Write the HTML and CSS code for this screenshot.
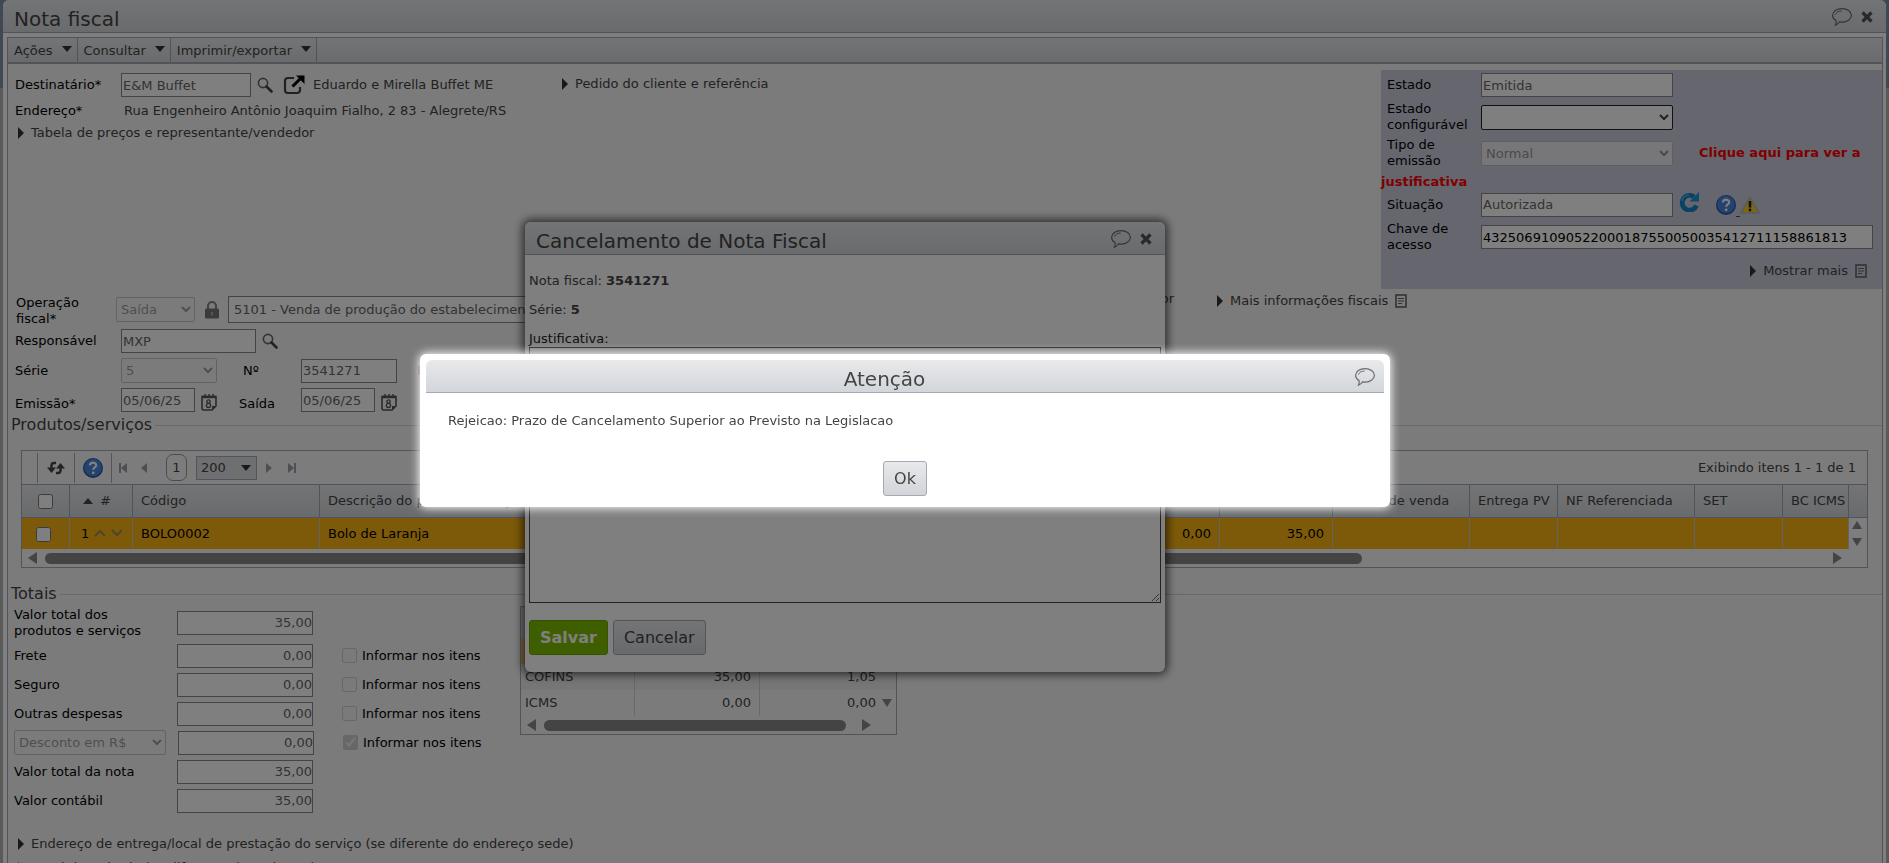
FILE: index.html
```
<!DOCTYPE html>
<html lang="pt-BR">
  <head>
    <meta charset="UTF-8" />
    <meta name="viewport" content="width=device-width, initial-scale=1.0" />
    <title>Nota fiscal</title>
    <link rel="stylesheet" href="styles.css">
  </head>
  <body>
    <!-- ícones -->
    <svg class="sprite" width="0" height="0" aria-hidden="true">
      <symbol id="i-bubble" viewBox="0 0 20 18">
        <path d="M4 12.600C1.800 11.200.6 9.400.6 7.400.6 3.600 4.800.6 10 .6s9.400 3 9.400 6.600-4 6.800-9 6.900c-1 0-1.900-.1-2.800-.3C6.600 15.400 5.200 16.600 3.400 17.200c.8-1.400 1-2.900.6-4.600z" fill="none" stroke="currentColor" stroke-width="1.200"/>
        <path d="M3.400 6.600C4.200 4.400 6.600 3 9.600 3" fill="none" stroke="currentColor" stroke-width="1"/>
      </symbol>
      <symbol id="i-close" viewBox="0 0 12 12">
        <path d="M1.500 1.500l9 9M10.500 1.500l-9 9" stroke="currentColor" stroke-width="3.200"/>
      </symbol>
      <symbol id="i-search" viewBox="0 0 16 16">
        <circle cx="6" cy="6" r="4.600" fill="none" stroke="#666" stroke-width="1.600"/>
        <path d="M9.500 9.500l5 5" stroke="#444" stroke-width="2.600" stroke-linecap="round"/>
      </symbol>
      <symbol id="i-open" viewBox="0 0 22 20">
        <path d="M11 3H5Q2 3 2 6v9q0 3 3 3h9q3 0 3-3v-3" fill="none" stroke="#444" stroke-width="2.200"/>
        <path d="M9.500 11.500L17 4" stroke="#000" stroke-width="3"/>
        <path d="M13 .5h8.500V9z" fill="#000"/>
      </symbol>
      <symbol id="i-note" viewBox="0 0 12 14">
        <rect x="1" y="1" width="10" height="12" fill="none" stroke="#666" stroke-width="1.600"/>
        <path d="M3 4.500h6M3 7h6M3 9.500h4" stroke="#666" stroke-width="1.200"/>
      </symbol>
      <symbol id="i-lock" viewBox="0 0 14 18">
        <path d="M3 8V5a4 4 0 0 1 8 0v3" fill="none" stroke="#888" stroke-width="2.200"/>
        <rect x="0" y="7.500" width="14" height="10" rx="1.500" fill="#777"/>
        <path d="M7 11v3.500" stroke="#bbb" stroke-width="1.600"/>
      </symbol>
      <symbol id="i-cal" viewBox="0 0 16 18">
        <path d="M1 3.500h14V13l-4 4H2.500Q1 17 1 15.500z" fill="none" stroke="#555" stroke-width="1.600"/>
        <path d="M1 4h14" stroke="#555" stroke-width="2.400"/>
        <path d="M4 1v2.500M8 1v2.500M12 1v2.500" stroke="#555" stroke-width="1.400"/>
        <path d="M15 13l-4 4v-4z" fill="#555"/>
        <circle cx="7.500" cy="8.600" r="1.700" fill="none" stroke="#555" stroke-width="1.300"/>
        <circle cx="7.500" cy="12.400" r="2.100" fill="none" stroke="#555" stroke-width="1.300"/>
      </symbol>
      <symbol id="i-refresh" viewBox="0 0 20 20">
        <path d="M17.500 13.500A7.400 7.400 0 1 1 15 4.800" fill="none" stroke="#1583c8" stroke-width="4.800"/>
        <path d="M20 0v9.500h-9.500z" fill="#1f92d8"/>
        <path d="M3 9Q4 3.500 10 3" fill="none" stroke="#63c0ee" stroke-width="1.200"/>
      </symbol>
      <symbol id="i-help" viewBox="0 0 20 20">
        <circle cx="10" cy="10" r="10" fill="#2456a6"/>
        <circle cx="10" cy="9.500" r="8.800" fill="#4a86de"/>
        <path d="M6.800 7.400C7 5.400 8.300 4.600 10 4.600s3.200 1 3.200 2.700c0 2-3 2.300-3 4.500" fill="none" stroke="#fff" stroke-width="2.200"/>
        <circle cx="10.200" cy="14.800" r="1.400" fill="#fff"/>
      </symbol>
      <symbol id="i-warn" viewBox="0 0 20 18">
        <path d="M10 1.200L19 16.800H1z" fill="#f6d020" stroke="#b8b8b8" stroke-width="1.800" stroke-linejoin="round"/>
        <path d="M10 5v6.500" stroke="#222" stroke-width="2.600"/>
        <circle cx="10" cy="14" r="1.400" fill="#222"/>
      </symbol>
      <symbol id="i-reload" viewBox="0 0 18 14">
        <path d="M9 2H7Q4.500 2 4.500 4.500V8M9 12h2q2.500 0 2.500-2.500V6" fill="none" stroke="#444" stroke-width="2.400"/>
        <path d="M0 6.500h9L4.500 12zM9 7.500h9L13.500 2z" fill="#444"/>
      </symbol>
    </svg>

    <div class="window">
      <header class="bar">
        <h1>Nota fiscal</h1>
        <button type="button" class="icon" aria-label="Comentário"><svg class="bubble"><use href="#i-bubble"/></svg></button>
        <button type="button" class="icon" aria-label="Fechar"><svg class="close"><use href="#i-close"/></svg></button>
      </header>

      <main class="content">
        <nav class="menu">
          <button type="button">Ações<i class="down"></i></button>
          <button type="button">Consultar<i class="down"></i></button>
          <button type="button">Imprimir/exportar<i class="down"></i></button>
        </nav>

        <!-- destinatário e estado -->
        <section class="top">
          <div class="recipient">
            <div class="row">
              <label class="label" for="dest">Destinatário*</label>
              <input id="dest" class="w-130" type="text" value="E&amp;M Buffet" readonly>
              <svg class="search"><use href="#i-search"/></svg>
              <svg class="open"><use href="#i-open"/></svg>
              <span>Eduardo e Mirella Buffet ME</span>
            </div>
            <div class="row row-address">
              <span class="label">Endereço*</span>
              <span class="address">Rua Engenheiro Antônio Joaquim Fialho, 2 83 - Alegrete/RS</span>
            </div>
            <a class="more" href="#tabela"><i class="right"></i>Tabela de preços e representante/vendedor</a>
          </div>
          <a class="more order" href="#pedido"><i class="right"></i>Pedido do cliente e referência</a>

          <div class="status">
            <div class="status-row">
              <label for="estado">Estado</label>
              <input id="estado" class="w-192" type="text" value="Emitida" readonly>
            </div>
            <div class="status-row tall">
              <label for="conf">Estado configurável</label>
              <select id="conf" class="w-192 strong"><option></option></select>
            </div>
            <div class="status-row tall">
              <label for="tipo">Tipo de emissão</label>
              <select id="tipo" class="w-192" disabled><option>Normal</option></select>
              <a class="warning" href="#justificativa">Clique aqui para ver a</a>
            </div>
            <a class="warning rest" href="#justificativa">justificativa</a>
            <div class="status-row situation">
              <label for="sit">Situação</label>
              <input id="sit" class="w-192" type="text" value="Autorizada" readonly>
              <svg class="refresh"><use href="#i-refresh"/></svg>
              <svg class="help"><use href="#i-help"/></svg>
              <span class="underline"></span>
              <svg class="warn"><use href="#i-warn"/></svg>
            </div>
            <div class="status-row tall">
              <label for="chave">Chave de acesso</label>
              <input id="chave" class="key" type="text" value="43250691090522000187550050035412711158861813">
            </div>
            <a class="more show" href="#mais"><i class="right"></i>Mostrar mais<svg class="note"><use href="#i-note"/></svg></a>
          </div>
        </section>

        <!-- operação -->
        <section class="operation">
          <div class="row row-op">
            <label class="label op" for="oper">Operação fiscal*</label>
            <select id="oper" class="w-80" disabled><option>Saída</option></select>
            <svg class="lock"><use href="#i-lock"/></svg>
            <input class="nature" type="text" aria-label="Natureza da operação" value="5101 - Venda de produção do estabelecimento" readonly>
            <span class="payer">Por valor</span>
            <a class="more tax-info" href="#fiscais"><i class="right"></i>Mais informações fiscais<svg class="note"><use href="#i-note"/></svg></a>
          </div>
          <div class="row">
            <label class="label" for="resp">Responsável</label>
            <input id="resp" class="w-135" type="text" value="MXP" readonly>
            <svg class="search"><use href="#i-search"/></svg>
          </div>
          <div class="row">
            <label class="label" for="serie">Série</label>
            <select id="serie" class="w-96" disabled><option>5</option></select>
            <label class="label-2" for="num">Nº</label>
            <input id="num" class="w-96" type="text" value="3541271" readonly>
            <span class="faded">Próximo</span>
          </div>
          <div class="row">
            <label class="label low" for="emissao">Emissão*</label>
            <input id="emissao" class="w-74" type="text" value="05/06/25" readonly>
            <svg class="cal"><use href="#i-cal"/></svg>
            <label class="label-2 low" for="saida">Saída</label>
            <input id="saida" class="w-74" type="text" value="05/06/25" readonly>
            <svg class="cal"><use href="#i-cal"/></svg>
          </div>
        </section>

        <!-- produtos -->
        <h2 class="legend products-legend">Produtos/serviços</h2>
        <section class="grid">
          <div class="pager">
            <span class="cell first"></span>
            <span class="cell"><svg class="reload"><use href="#i-reload"/></svg></span>
            <span class="cell"><svg class="help"><use href="#i-help"/></svg></span>
            <svg class="nav" viewBox="0 0 58 12">
              <path d="M1 1h2v10H1zM9 1v10L3 6zM29 1v10l-6-5z"/>
            </svg>
            <span class="page">1</span>
            <select class="size" aria-label="Itens por página"><option>200</option></select>
            <svg class="nav next" viewBox="0 0 58 12">
              <path d="M9 1v10l6-5zM31 1v10l6-5zM37 1h2v10h-2z"/>
            </svg>
            <span class="count">Exibindo itens 1 - 1 de 1</span>
          </div>
          <table class="items">
            <colgroup>
              <col class="c-check"><col class="c-num"><col class="c-code"><col>
              <col class="c-value"><col class="c-value"><col class="c-order"><col class="c-short">
              <col class="c-order"><col class="c-short"><col class="c-last"><col class="c-scroll">
            </colgroup>
            <thead>
              <tr>
                <th class="check"><input type="checkbox" aria-label="Selecionar todos"></th>
                <th class="sort"><i class="up"></i>#</th>
                <th>Código</th>
                <th>Descrição do produto/serviço</th>
                <th>Desconto</th>
                <th>Total</th>
                <th>Pedido de venda</th>
                <th>Entrega PV</th>
                <th>NF Referenciada</th>
                <th>SET</th>
                <th>BC ICMS</th>
                <th></th>
              </tr>
            </thead>
            <tbody>
              <tr>
                <td class="check"><input type="checkbox" aria-label="Selecionar item 1"></td>
                <td class="sort">1<svg class="order-arrows" viewBox="0 0 28 10"><path d="M1 8l5-5 5 5M18 2l5 5 5-5"/></svg></td>
                <td>BOLO0002</td>
                <td>Bolo de Laranja</td>
                <td class="num">0,00</td>
                <td class="num">35,00</td>
                <td></td>
                <td></td>
                <td></td>
                <td></td>
                <td></td>
                <td class="scroll-v"><i class="arrow a-up"></i><i class="arrow a-down"></i></td>
              </tr>
            </tbody>
          </table>
          <div class="scroll-h"><i class="arrow a-left"></i><span class="track"><span class="thumb"></span></span><i class="arrow a-right"></i></div>
        </section>

        <!-- totais -->
        <h2 class="legend totals-legend">Totais</h2>
        <section class="totals">
          <div class="sums">
            <div class="sum two"><label for="t1">Valor total dos produtos e serviços</label><input id="t1" type="text" value="35,00" readonly></div>
            <div class="sum"><label for="t2">Frete</label><input id="t2" type="text" value="0,00" readonly><label class="inform"><input type="checkbox" disabled>Informar nos itens</label></div>
            <div class="sum"><label for="t3">Seguro</label><input id="t3" type="text" value="0,00" readonly><label class="inform"><input type="checkbox" disabled>Informar nos itens</label></div>
            <div class="sum"><label for="t4">Outras despesas</label><input id="t4" type="text" value="0,00" readonly><label class="inform"><input type="checkbox" disabled>Informar nos itens</label></div>
            <div class="sum"><select class="discount" aria-label="Desconto" disabled><option>Desconto em R$</option></select><input type="text" aria-label="Valor do desconto" value="0,00" readonly><label class="inform"><input type="checkbox" checked disabled>Informar nos itens</label></div>
            <div class="sum"><label for="t6">Valor total da nota</label><input id="t6" type="text" value="35,00" readonly></div>
            <div class="sum"><label for="t7">Valor contábil</label><input id="t7" type="text" value="35,00" readonly></div>
          </div>
          <div class="taxes">
            <table>
              <colgroup><col class="c-tax"><col class="c-base"><col><col class="c-scroll"></colgroup>
              <thead><tr><th>Imposto</th><th>Base</th><th>Valor</th><th></th></tr></thead>
              <tbody>
                <tr class="selected"><td>PIS</td><td class="num">35,00</td><td class="num">0,23</td><td></td></tr>
                <tr class="odd"><td>COFINS</td><td class="num">35,00</td><td class="num">1,05</td><td></td></tr>
                <tr><td>ICMS</td><td class="num">0,00</td><td class="num">0,00</td><td class="scroll-v"><i class="arrow a-down"></i></td></tr>
              </tbody>
            </table>
            <div class="scroll-h"><i class="arrow a-left"></i><span class="thumb"></span><i class="arrow a-right"></i></div>
          </div>
        </section>
        <div class="links">
          <a class="more" href="#entrega"><i class="right"></i>Endereço de entrega/local de prestação do serviço (se diferente do endereço sede)</a>
          <a class="more" href="#retirada"><i class="right"></i>Local de retirada (se diferente do emitente)</a>
        </div>
      </main>
    </div>

    <!-- cancelamento -->
    <div class="dialog cancel" role="dialog" aria-labelledby="cancel-title">
      <header class="bar">
        <h2 id="cancel-title">Cancelamento de Nota Fiscal</h2>
        <button type="button" class="icon" aria-label="Comentário"><svg class="bubble"><use href="#i-bubble"/></svg></button>
        <button type="button" class="icon" aria-label="Fechar"><svg class="close"><use href="#i-close"/></svg></button>
      </header>
      <div class="cancel-body">
        <p>Nota fiscal: <b>3541271</b></p>
        <p>Série: <b>5</b></p>
        <label for="just">Justificativa:</label>
        <textarea id="just"></textarea>
        <div class="actions">
          <button type="button" class="btn save">Salvar</button>
          <button type="button" class="btn">Cancelar</button>
        </div>
      </div>
    </div>

    <div class="overlay"></div>

    <!-- alerta -->
    <div class="dialog alert" role="alertdialog" aria-labelledby="alert-title">
      <header class="bar">
        <h2 id="alert-title">Atenção</h2>
        <button type="button" class="icon" aria-label="Comentário"><svg class="bubble"><use href="#i-bubble"/></svg></button>
      </header>
      <p>Rejeicao: Prazo de Cancelamento Superior ao Previsto na Legislacao</p>
      <button type="button" class="btn">Ok</button>
    </div>
  </body>
</html>
```

FILE: styles.css
```
* {
  padding: 0;
  margin: 0;
  box-sizing: border-box;
}
html,
body {
  height: 100%;
  overflow: hidden;
}
body {
  background: #b5b5b5 linear-gradient(#7d93a8, #7d93a8) no-repeat;
  background-size: 100% 88px;
  padding: 0 3px;
  font-family: "DejaVu Sans", Verdana, sans-serif;
  font-size: 13px;
  line-height: 16px;
  color: #444;
}
svg {
  display: block;
  flex: none;
}
.sprite {
  position: absolute;
}
a {
  color: inherit;
  text-decoration: none;
}
button,
input,
select,
textarea {
  font: inherit;
}
h1,
h2 {
  font-weight: normal;
}
label,
.label {
  color: #000;
}

/* inputs */
input[type="text"] {
  height: 24px;
  border: 1px solid #888;
  background: #fff;
  color: #666;
  padding: 0 1px;
  min-width: 0;
}
select {
  height: 25px;
  border: 1px solid #888;
  border-radius: 2px;
  background-color: #fff;
  color: #444;
}
select:disabled {
  background-color: #f8f8f8;
  border-color: #bbb;
  color: #888;
  opacity: 0.8;
}
select.strong {
  border-color: #222;
}
.w-74 {
  width: 74px;
}
.w-80 {
  width: 79px;
}
.w-96 {
  width: 96px;
}
.w-130 {
  width: 130px;
}
.w-135 {
  width: 135px;
}
.w-192 {
  width: 192px;
}

/* title bars */
.bar {
  display: flex;
  align-items: center;
  height: 33px;
  padding: 2px 13px 0 11px;
  background: linear-gradient(#e8e9eb, #d2d6da);
  border-bottom: 1px solid #a4a9b3;
  border-radius: 6px 6px 0 0;
}
.bar h1,
.bar h2 {
  flex: 1;
  padding-top: 4px;
  font-size: 20px;
  line-height: 24px;
}
.icon {
  border: none;
  background: none;
  color: #6a6a6a;
  margin-left: 9px;
}
.bubble {
  width: 20px;
  height: 18px;
}
.close {
  width: 12px;
  height: 12px;
  color: #555;
}

.window {
  display: flex;
  flex-direction: column;
  height: 100%;
  background: #fff;
  border-radius: 6px 6px 0 0;
}
.content {
  flex: 1;
  min-height: 0;
  overflow: hidden;
  margin: 4px 3px 0 4px;
  border: 1px solid #a4a9b3;
  border-bottom: none;
  background: #f7f7f7;
}

/* menu */
.menu {
  display: flex;
  height: 26px;
  background: linear-gradient(#e8e9eb, #d2d6da);
  border-bottom: 2px solid #a4a9b3;
}
.menu button {
  display: flex;
  align-items: center;
  gap: 9px;
  padding: 2px 5px 0 6px;
  border: none;
  border-right: 1px solid #a4a9b3;
  background: none;
  color: #444;
}
.down,
.right,
.up {
  flex: none;
  width: 0;
  height: 0;
  border: 5px solid transparent;
}
.down {
  border-width: 6px 5px 0;
  border-top-color: #333;
  margin-bottom: 4px;
}
.right {
  border-width: 6px 0 6px 6px;
  border-left-color: #333;
}
.up {
  border-width: 0 5px 6px;
  border-bottom-color: #444;
}
.more {
  display: flex;
  align-items: center;
  gap: 7px;
}

/* destinatário */
.top {
  display: flex;
  align-items: flex-start;
  padding-top: 6px;
}
.recipient {
  width: 554px;
  padding: 3px 0 0 7px;
}
.row {
  display: flex;
  align-items: center;
}
.label {
  width: 106px;
  flex: none;
}
.search {
  width: 16px;
  height: 16px;
  margin: 0 10px 0 6px;
}
.open {
  width: 22px;
  height: 20px;
  margin-right: 8px;
}
.row-address {
  height: 28px;
}
.address {
  padding-left: 3px;
}
.recipient .more {
  padding-left: 3px;
}
.order {
  margin-top: 6px;
}

.status {
  width: 501px;
  height: 219px;
  margin-left: auto;
  padding-top: 3px;
  background: #ccccde;
}
.status-row {
  display: flex;
  align-items: center;
  padding-left: 6px;
}
.status-row label {
  width: 94px;
  flex: none;
}
.status-row.tall {
  height: 36px;
  padding-top: 4px;
}
.status .warning {
  color: #f00;
  font-weight: bold;
  padding-left: 26px;
}
.status .rest {
  display: block;
  padding: 5px 0 1px;
}
.situation {
  margin-top: 1px;
}
.refresh {
  width: 20px;
  height: 20px;
  margin: 0 17px 5px 6px;
}
.help {
  width: 20px;
  height: 20px;
}
.underline {
  width: 4px;
  height: 25px;
  border-bottom: 1px solid #444;
}
.warn {
  width: 20px;
  height: 18px;
}
.status .key {
  flex: 1;
  margin-right: 9px;
  color: #000;
}
.note {
  width: 12px;
  height: 14px;
}
.show {
  justify-content: flex-end;
  margin: 10px 15px 0 0;
}

/* operação */
.operation {
  display: flex;
  flex-direction: column;
  gap: 5px;
  padding: 6px 0 0 7px;
}
.row-op {
  height: 29px;
}
.label.op {
  width: 101px;
  padding: 2px 20px 0 1px;
}
.lock {
  width: 14px;
  height: 18px;
  margin: 0 9px 0 10px;
}
.row .nature {
  width: 560px;
  height: 27px;
  padding-left: 5px;
}
.payer {
  width: 386px;
  padding-bottom: 22px;
  margin-right: 43px;
  text-align: right;
}
.tax-info {
  padding-bottom: 18px;
}
.label-2 {
  width: 58px;
  flex: none;
}
.w-96 + .label-2 {
  margin-left: 26px;
}
.faded {
  margin-left: 20px;
  color: #999;
}
.low {
  padding-top: 8px;
}
.cal {
  width: 16px;
  height: 18px;
  margin: 4px 22px 0 6px;
}
.cal + .label-2 {
  width: 62px;
}

.legend {
  display: flex;
  align-items: center;
  gap: 3px;
  margin-left: 3px;
  font-size: 16px;
  line-height: 24px;
}
.legend::after {
  content: "";
  flex: 1;
  height: 1px;
  background: #d0d0d0;
}
.products-legend {
  margin-top: 1px;
}

/* grid */
.grid {
  margin: 13px 14px 0 13px;
  border: 1px solid #a4a9b3;
  background: #fafafa;
}
.pager {
  display: flex;
  align-items: center;
  height: 33px;
  padding-right: 11px;
  background: #f9f9f9;
}
.cell {
  display: flex;
  align-items: center;
  justify-content: center;
  width: 37px;
  height: 30px;
  border-right: 1px solid #a4a9b3;
}
.cell.first {
  width: 16px;
}
.reload {
  width: 18px;
  height: 14px;
}
.nav {
  width: 58px;
  height: 12px;
  margin: 0 -10px 0 6px;
  fill: #9a9fa8;
}
.nav.next {
  margin-left: 0;
}
.page {
  width: 21px;
  height: 27px;
  border: 1px solid #999;
  border-radius: 7px;
  line-height: 26px;
  text-align: center;
}
.size {
  appearance: none;
  width: 61px;
  height: 24px;
  margin-left: 9px;
  padding-left: 4px;
  border-color: #a4a9b3;
  border-radius: 0;
  background: #dcdee2 url("data:image/svg+xml,%3Csvg xmlns='http://www.w3.org/2000/svg' width='10' height='6'%3E%3Cpath d='M0 0h10L5 6z' fill='%23333'/%3E%3C/svg%3E") no-repeat right 5px center;
}
.count {
  margin-left: auto;
}
table {
  width: 100%;
  table-layout: fixed;
  border-collapse: separate;
  border-spacing: 0;
}
.items th {
  height: 34px;
  padding: 0 0 0 8px;
  border: solid #a4a9b3;
  border-width: 1px 1px 1px 0;
  background: linear-gradient(#e8e9eb, #d2d6da);
  font-weight: normal;
  text-align: left;
  white-space: nowrap;
  overflow: hidden;
}
.items th:last-child {
  border-right: none;
}
.items td {
  height: 31px;
  padding: 0 0 0 8px;
  border-right: 1px solid #c9c9c9;
  background: #fab514;
  color: #000;
}
.items td.num {
  padding-right: 8px;
  text-align: right;
}
.c-check {
  width: 48px;
}
.c-num {
  width: 63px;
}
.c-code {
  width: 187px;
}
.c-value {
  width: 113px;
}
.c-order {
  width: 137px;
}
.c-short {
  width: 88px;
}
.c-last {
  width: 66px;
}
.c-scroll {
  width: 18px;
}
.items .check {
  padding: 0;
  text-align: center;
}
.items td.check {
  padding-right: 4px;
}
.check input {
  width: 15px;
  height: 15px;
  vertical-align: middle;
}
.items th.sort {
  padding-left: 13px;
}
.sort .up {
  display: inline-block;
  margin-right: 7px;
  vertical-align: 1px;
}
.items td.sort {
  padding-left: 11px;
}
.order-arrows {
  display: inline-block;
  width: 28px;
  height: 10px;
  margin-left: 5px;
  fill: none;
  stroke: #9a8a5a;
  stroke-width: 2;
}
td.scroll-v,
.items td.scroll-v {
  padding: 0 0 0 3px;
  background: none;
  border: none;
}
.arrow {
  display: block;
  flex: none;
  width: 0;
  height: 0;
  border: 0 solid transparent;
}
.a-up {
  border-width: 0 5px 8px;
  border-bottom-color: #888;
  margin-bottom: 9px;
}
.a-down {
  border-width: 8px 5px 0;
  border-top-color: #888;
}
.a-left {
  border-width: 6px 9px 6px 0;
  border-right-color: #888;
}
.a-right {
  border-width: 6px 0 6px 9px;
  border-left-color: #888;
}
.scroll-h {
  display: flex;
  align-items: center;
  height: 18px;
  padding: 0 25px 0 6px;
}
.track {
  flex: 1;
  padding: 0 8px;
}
.thumb {
  display: block;
  width: 74%;
  height: 11px;
  border-radius: 6px;
  background: #888;
}

/* totais */
.totals-legend {
  margin-top: 14px;
}
.totals {
  display: flex;
  align-items: flex-start;
  padding-left: 6px;
}
.sums {
  width: 506px;
}
.sum {
  display: flex;
  align-items: center;
  height: 29px;
}
.sum.two {
  height: 33px;
  margin-bottom: 2px;
}
.sum label:first-child {
  width: 163px;
  padding-right: 20px;
}
.sum input[type="text"] {
  width: 136px;
  padding: 0;
  text-align: right;
}
.discount {
  width: 152px;
  margin-right: 12px;
}
.inform {
  display: flex;
  align-items: center;
  gap: 5px;
  margin-left: 29px;
}
.inform input {
  width: 15px;
  height: 15px;
}
.taxes {
  width: 377px;
  border: 1px solid #a4a9b3;
  background: #f7f7f7;
}
.taxes th {
  height: 31px;
  background: #e0e2e5;
}
.c-tax {
  width: 114px;
}
.c-base {
  width: 125px;
}
.taxes td {
  height: 26px;
  padding-left: 4px;
  border-right: 1px solid #d0d0d0;
}
.taxes td:nth-child(n + 3) {
  border-right: none;
}
.taxes td.num {
  padding-right: 8px;
  text-align: right;
}
.taxes td.num:nth-child(3) {
  padding-right: 2px;
}
.taxes .selected td {
  background: #fcd27e;
}
.taxes .odd td {
  background: #ececec;
}
.taxes .thumb {
  flex: 1;
  margin: 0 16px 0 8px;
}
.links {
  display: flex;
  flex-direction: column;
  gap: 8px;
  padding: 21px 0 0 10px;
}

/* dialogs */
.dialog {
  position: absolute;
  background: #fff;
}
.cancel {
  left: 525px;
  top: 222px;
  width: 640px;
  border-radius: 6px;
  box-shadow: 0 0 8px 3px rgba(0, 0, 0, 0.6);
}
.cancel-body {
  padding: 18px 4px 17px;
}
.cancel-body p {
  margin-bottom: 13px;
}
.cancel-body label {
  display: block;
  color: #222;
}
.cancel-body textarea {
  display: block;
  width: 100%;
  height: 256px;
  border: 1px solid #444;
}
.actions {
  display: flex;
  gap: 5px;
  margin-top: 17px;
}
.btn {
  height: 35px;
  padding: 0 10px;
  border: 1px solid #a4a9b3;
  border-radius: 3px;
  background: linear-gradient(#e8e9eb, #d2d4d8);
  color: #444;
  font-size: 16px;
}
.save {
  border-color: #6fa600;
  background: #7ebc00;
  color: #fff;
  font-weight: bold;
}
.overlay {
  position: fixed;
  inset: 0;
  background: rgba(0, 0, 0, 0.5);
}
.alert {
  left: 420px;
  top: 354px;
  width: 970px;
  padding: 6px 6px 11px;
  border-radius: 6px;
  box-shadow: 0 0 10px 1px #fff;
}
.alert .bar {
  padding-right: 9px;
}
.alert h2 {
  padding-right: 14px;
  text-align: center;
}
.alert p {
  padding: 20px 22px 32px;
}
.alert .btn {
  display: block;
  margin: 0 auto;
}
```
